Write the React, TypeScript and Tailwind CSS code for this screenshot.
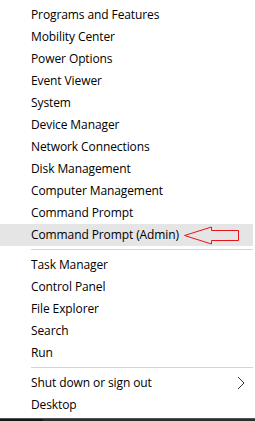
import React from "react";

const groupA = [
  "Programs and Features",
  "Mobility Center",
  "Power Options",
  "Event Viewer",
  "System",
  "Device Manager",
  "Network Connections",
  "Disk Management",
  "Computer Management",
  "Command Prompt",
];
const groupB = ["Task Manager", "Control Panel", "File Explorer", "Search", "Run"];

function Item({ label, active, children }: { label: string; active?: boolean; children?: React.ReactNode }) {
  return (
    <div
      className={
        "relative flex h-[22px] items-center justify-between pl-[31px] text-[12px] leading-none tracking-[-0.1px] text-black " +
        (active ? "bg-[#e5e5e5]" : "")
      }
    >
      <span className="pb-[1px]">{label}</span>
      {children}
    </div>
  );
}

function Sep() {
  return (
    <div className="pt-[3px] pb-[4px] pl-[31px]">
      <div className="h-px bg-[#d4d4d4]" />
    </div>
  );
}

export default function App() {
  return (
    <div
      className="flex h-[421px] w-[255px] flex-col overflow-hidden bg-white"
      style={{ fontFamily: '"Open Sans", "Noto Sans", sans-serif' }}
    >
      <div className="w-[253px] pt-[4px]">
        {groupA.map((l) => (
          <Item key={l} label={l} />
        ))}
        <Item label="Command Prompt (Admin)" active>
          <svg
            className="absolute left-[183px] top-[2px]"
            width="57"
            height="19"
            viewBox="0 0 57 19"
            fill="none"
          >
            <path
              d="M1.5 9.5 L28.5 1 L28.5 4.5 L55.5 4.5 L55.5 14.5 L28.5 14.5 L28.5 18 Z"
              stroke="#e8141b"
              strokeWidth="1"
              fill="none"
            />
          </svg>
        </Item>
        <Sep />
        {groupB.map((l) => (
          <Item key={l} label={l} />
        ))}
        <Sep />
        <Item label="Shut down or sign out">
          <svg className="mr-[8px]" width="8" height="14" viewBox="0 0 8 14" fill="none">
            <path d="M1 1 L7 7 L1 13" stroke="#333" strokeWidth="1" />
          </svg>
        </Item>
        <Item label="Desktop" />
      </div>
      <div className="flex-1" />
      <div className="flex h-[3px] border-t border-[#555]">
        <div className="w-[43px] bg-[#151515]" />
        <div className="flex-1 bg-[#2c2c2c]" />
      </div>
    </div>
  );
}
